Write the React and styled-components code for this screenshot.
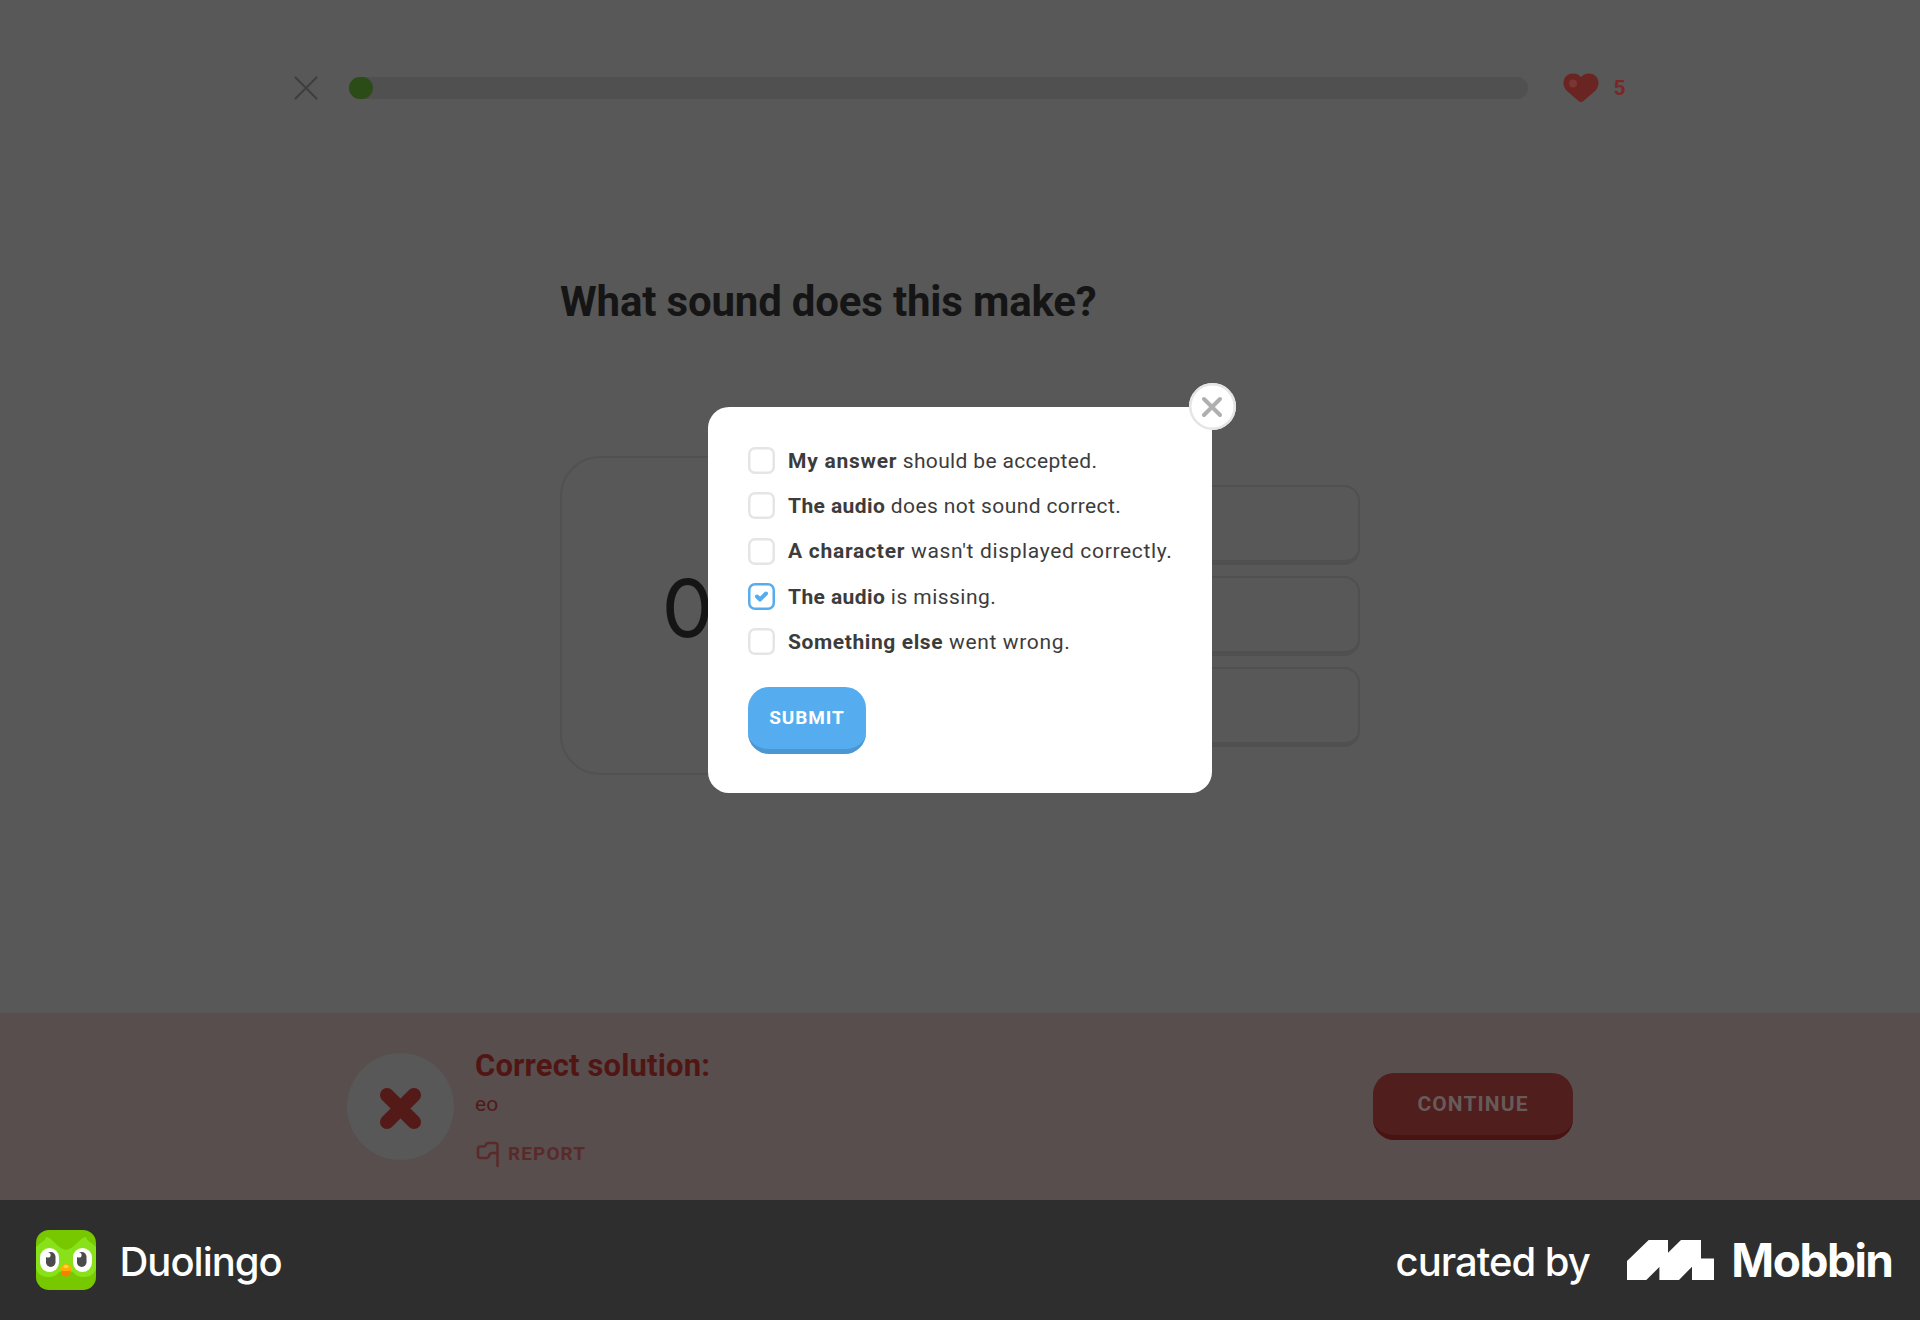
import React from "react";
import styled, { createGlobalStyle } from "styled-components";

const Global = createGlobalStyle`
  *, *::before, *::after { box-sizing: border-box; }
  body { margin: 0; background: #585858; font-family: Roboto, "Liberation Sans", sans-serif; }
`;

const Page = styled.div`
  position: relative;
  width: 1920px;
  height: 1320px;
  display: flex;
  flex-direction: column;
  background: #585858;
  overflow: hidden;
`;

const Lesson = styled.main`
  flex: 1;
  display: flex;
  flex-direction: column;
  align-items: center;
`;

const TopBar = styled.header`
  width: 1332px;
  height: 176px;
  display: flex;
  align-items: center;

  > * { flex-shrink: 0; }
`;

const Quit = styled.svg`
  width: 24px;
  height: 24px;
  margin-right: 31px;
`;

const Track = styled.div`
  width: 1179px;
  height: 22px;
  border-radius: 11px;
  background: #505050;
`;

const Fill = styled.div`
  width: 24px;
  height: 22px;
  border-radius: 11px;
  background: #2c4c17;
`;

const Heart = styled.svg`
  width: 36px;
  height: 30px;
  margin-left: 35px;
`;

const Lives = styled.span`
  margin-left: 14.5px;
  font-size: 21px;
  font-weight: 700;
  line-height: 24px;
  color: #7c2727;
`;

const Challenge = styled.section`
  width: 800px;
  display: flex;
  flex-direction: column;
`;

const Question = styled.h1`
  margin: 99px 0 0;
  height: 54px;
  line-height: 54px;
  font-size: 42px;
  font-weight: 700;
  letter-spacing: -0.18px;
  white-space: nowrap;
  color: #151515;
`;

const Board = styled.div`
  margin-top: 127px;
  height: 319px;
  display: flex;
  justify-content: space-between;
  align-items: center;
`;

const PromptCard = styled.div`
  width: 292px;
  height: 319px;
  padding: 0 5px 14px 0;
  border: 2px solid #515151;
  border-radius: 40px;
  display: flex;
  align-items: center;
  justify-content: center;
  font-family: "Noto Sans CJK KR", sans-serif;
  font-size: 94px;
  line-height: 100px;
  color: #151515;
`;

const Choices = styled.div`
  width: 470px;
  display: flex;
  flex-direction: column;
  gap: 11px;
  padding-top: 1px;
`;

const Choice = styled.div`
  height: 80px;
  border: 2px solid #505050;
  border-bottom-width: 5px;
  border-radius: 16px;
`;

const Feedback = styled.section`
  height: 187px;
  padding: 0 347px;
  display: flex;
  align-items: flex-start;
  background: #584e4e;
`;

const Verdict = styled.div`
  width: 107px;
  height: 107px;
  margin-top: 40px;
  border-radius: 50%;
  background: #585858;
  display: flex;
  align-items: center;
  justify-content: center;
`;

const Cross = styled.svg`
  width: 43px;
  height: 43px;
  margin-top: 3px;
`;

const Solution = styled.div`
  margin: 34px 0 0 21px;
  flex: 1;
  display: flex;
  flex-direction: column;
  align-items: flex-start;
`;

const SolutionTitle = styled.h2`
  margin: 0;
  height: 38px;
  line-height: 38px;
  font-size: 31px;
  font-weight: 700;
  letter-spacing: 0.15px;
  color: #511614;
`;

const SolutionText = styled.p`
  margin: 6px 0 0;
  height: 26px;
  line-height: 26px;
  font-size: 21px;
  color: #511a18;
`;

const Report = styled.div`
  margin: 23px 0 0 1px;
  height: 26px;
  display: flex;
  align-items: center;
  font-size: 19px;
  font-weight: 700;
  letter-spacing: 1.1px;
  color: #5a2a2a;
`;

const Flag = styled.svg`
  width: 24px;
  height: 27px;
  margin-right: 8px;
  margin-top: 2px;
`;

const Button = styled.div`
  width: ${(p) => p.$w}px;
  height: 67px;
  border-radius: 21px;
  border-bottom: 5px solid ${(p) => p.$edge};
  background: ${(p) => p.$bg};
  color: ${(p) => p.$ink};
  display: flex;
  align-items: center;
  justify-content: center;
  font-size: ${(p) => p.$size}px;
  font-weight: 700;
  letter-spacing: ${(p) => p.$track}px;
`;

const ContinueSlot = styled.div`
  margin-top: 60px;
`;

const Modal = styled.div`
  position: absolute;
  left: 708px;
  top: 406.5px;
  width: 504px;
  height: 386.5px;
  padding: 31.5px 40px 39.5px;
  border-radius: 21px;
  background: #fff;
  display: flex;
  flex-direction: column;
  justify-content: space-between;
`;

const Close = styled.div`
  position: absolute;
  right: -23.5px;
  top: -23.5px;
  width: 47px;
  height: 47px;
  box-shadow: inset 0 0 0 2.5px #e5e5e5;
  border-radius: 50%;
  background: #fff;
  display: flex;
  align-items: center;
  justify-content: center;
`;

const Option = styled.div`
  height: 45.3px;
  display: flex;
  align-items: center;
  font-size: 21px;
  letter-spacing: ${(p) => p.$track}px;
  white-space: pre;
  color: #3c3c3c;

  b { letter-spacing: ${(p) => p.$boldTrack}px; }
`;

const Box = styled.span`
  flex: none;
  width: 27px;
  height: 27px;
  margin-right: 13px;
  box-shadow: inset 0 0 0 2.5px ${(p) => (p.$on ? "#55acee" : "#e5e5e5")};
  border-radius: 7px;
  display: flex;
  align-items: center;
  justify-content: center;
`;

const Footer = styled.footer`
  height: 120px;
  padding: 0 27.5px 0 36px;
  display: flex;
  align-items: center;
  background: #2e2e2e;
  color: #fff;
  font-family: Inter, "Liberation Sans", sans-serif;
`;

const Spacer = styled.div`
  flex: 1;
`;

const Brand = styled.span`
  font-size: ${(p) => p.$size}px;
  font-weight: ${(p) => p.$weight};
  letter-spacing: ${(p) => p.$track}px;
  line-height: 50px;
  margin-left: ${(p) => p.$left}px;
  padding-top: ${(p) => p.$drop || 0}px;
`;

const Logo = styled.svg`
  width: ${(p) => p.$w}px;
  height: ${(p) => p.$h}px;
  margin-left: ${(p) => p.$left || 0}px;
`;

const options = [
  { bold: "My answer", rest: " should be accepted.", bt: 0.75, rt: 0.35 },
  { bold: "The audio", rest: " does not sound correct.", bt: 0.4, rt: 0.4 },
  { bold: "A character", rest: " wasn't displayed correctly.", bt: 0.75, rt: 0.65 },
  { bold: "The audio", rest: " is missing.", bt: 0.4, rt: 0.45, on: true },
  { bold: "Something else", rest: " went wrong.", bt: 0.6, rt: 0.65 },
];

export default function App() {
  return (
    <Page>
      <Global />
      <Lesson>
        <TopBar>
          <Quit viewBox="0 0 24 24">
            <path d="M1.5 1.5 22.5 22.5M22.5 1.5 1.5 22.5" stroke="#3f3f3f" strokeWidth="2.2" strokeLinecap="round" />
          </Quit>
          <Track><Fill /></Track>
          <Heart viewBox="0 0 36 30">
            <path d="M10 0.5C13.5 .5 16.5 2 18 4.2 19.5 2 22.5 .5 26 .5 31.5 .5 35.5 4.5 35.5 10 35.5 13.5 34 16 32 18L20.5 28Q18 30 15.5 28L4 18C2 16 .5 13.5 .5 10 .5 4.5 4.5 .5 10 .5Z" fill="#6a2523" />
            <circle cx="10" cy="10.5" r="4" fill="#7b3634" />
          </Heart>
          <Lives>5</Lives>
        </TopBar>
        <Challenge>
          <Question>What sound does this make?</Question>
          <Board>
            <PromptCard>어</PromptCard>
            <Choices><Choice /><Choice /><Choice /></Choices>
          </Board>
        </Challenge>
      </Lesson>
      <Feedback>
        <Verdict>
          <Cross viewBox="0 0 43 43">
            <path d="M8 8 35 35M35 8 8 35" stroke="#541a18" strokeWidth="14" strokeLinecap="round" />
          </Cross>
        </Verdict>
        <Solution>
          <SolutionTitle>Correct solution:</SolutionTitle>
          <SolutionText>eo</SolutionText>
          <Report>
            <Flag viewBox="0 0 24 27">
              <path d="M21.5 25V4.5Q21.5 2 19 2H12.5Q10.5 2 10 3.5 9.5 5.5 7.5 5.5H4.5Q2 5.5 2 8V14.5Q2 17 4.5 17H10.5Q12.5 17 13.2 14.5 14 12 16 12H21" fill="none" stroke="#5a2a2a" strokeWidth="2.5" strokeLinecap="round" strokeLinejoin="round" />
            </Flag>
            REPORT
          </Report>
        </Solution>
        <ContinueSlot>
          <Button $w={200} $bg="#511e1e" $edge="#481311" $ink="#675b59" $size={21} $track={1.1}>CONTINUE</Button>
        </ContinueSlot>
      </Feedback>
      <Footer>
        <Logo $w={60} $h={60} viewBox="0 0 60 60">
          <rect width="60" height="60" rx="13" fill="#78c800" />
          <path d="M0 17Q4 13 9 10Q9 7 11 7C17 9 21 18 30 20C39 18 43 9 49 7Q51 7 51 10Q56 13 60 17V38Q58 47 48 47Q40 47 37 42H23Q20 47 12 47Q2 47 0 38Z" fill="#89e219" />
          <rect x="4" y="18" width="19" height="24" rx="9.5" fill="#fff" />
          <rect x="37" y="18" width="19" height="24" rx="9.5" fill="#fff" />
          <rect x="10" y="22" width="9.5" height="15" rx="4.7" fill="#4b4b4b" />
          <rect x="41" y="22" width="9.5" height="15" rx="4.7" fill="#4b4b4b" />
          <circle cx="12" cy="25" r="2.6" fill="#fff" />
          <circle cx="43" cy="25" r="2.6" fill="#fff" />
          <path d="M25 40H35L34 45Q30 48 26 45Z" fill="#f48000" />
          <path d="M24 39Q26 34 30 34T36 39Q36 41 30 41T24 39Z" fill="#ffb100" />
          <ellipse cx="30" cy="36.5" rx="2.5" ry="1.5" fill="#ffd93b" />
        </Logo>
        <Brand $size={40} $weight={500} $track={-1} $left={23.5} $drop={4}>Duolingo</Brand>
        <Spacer />
        <Brand $size={40} $weight={500} $track={-1} $left={0} $drop={4}>curated by</Brand>
        <Logo $w={87} $h={40} $left={37} viewBox="0 0 87 40">
          <path d="M0 21 21.7 0H41V12.7L54 0H74V18.5H87V40H65V26.7L52 40H32.4V27L19.3 40H0Z" fill="#fff" />
        </Logo>
        <Brand $size={46} $weight={700} $track={-1.5} $left={17.5}>Mobbin</Brand>
      </Footer>
      <Modal>
        <Close>
          <svg width="22" height="22" viewBox="0 0 22 22">
            <path d="M3 3 19 19M19 3 3 19" stroke="#afafaf" strokeWidth="4" strokeLinecap="round" />
          </svg>
        </Close>
        <div>
          {options.map((o, i) => (
            <Option key={i} $track={o.rt} $boldTrack={o.bt}>
              <Box $on={o.on}>
                {o.on && (
                  <svg width="15" height="13" viewBox="0 0 15 13">
                    <path d="M3 6.5 6 9.5 12 3.5" fill="none" stroke="#55acee" strokeWidth="4" strokeLinecap="round" strokeLinejoin="round" />
                  </svg>
                )}
              </Box>
              <b>{o.bold}</b>
              <span>{o.rest}</span>
            </Option>
          ))}
        </div>
        <Button $w={118} $bg="#55acee" $edge="#4a97d2" $ink="#fff" $size={19} $track={0.9}>SUBMIT</Button>
      </Modal>
    </Page>
  );
}
